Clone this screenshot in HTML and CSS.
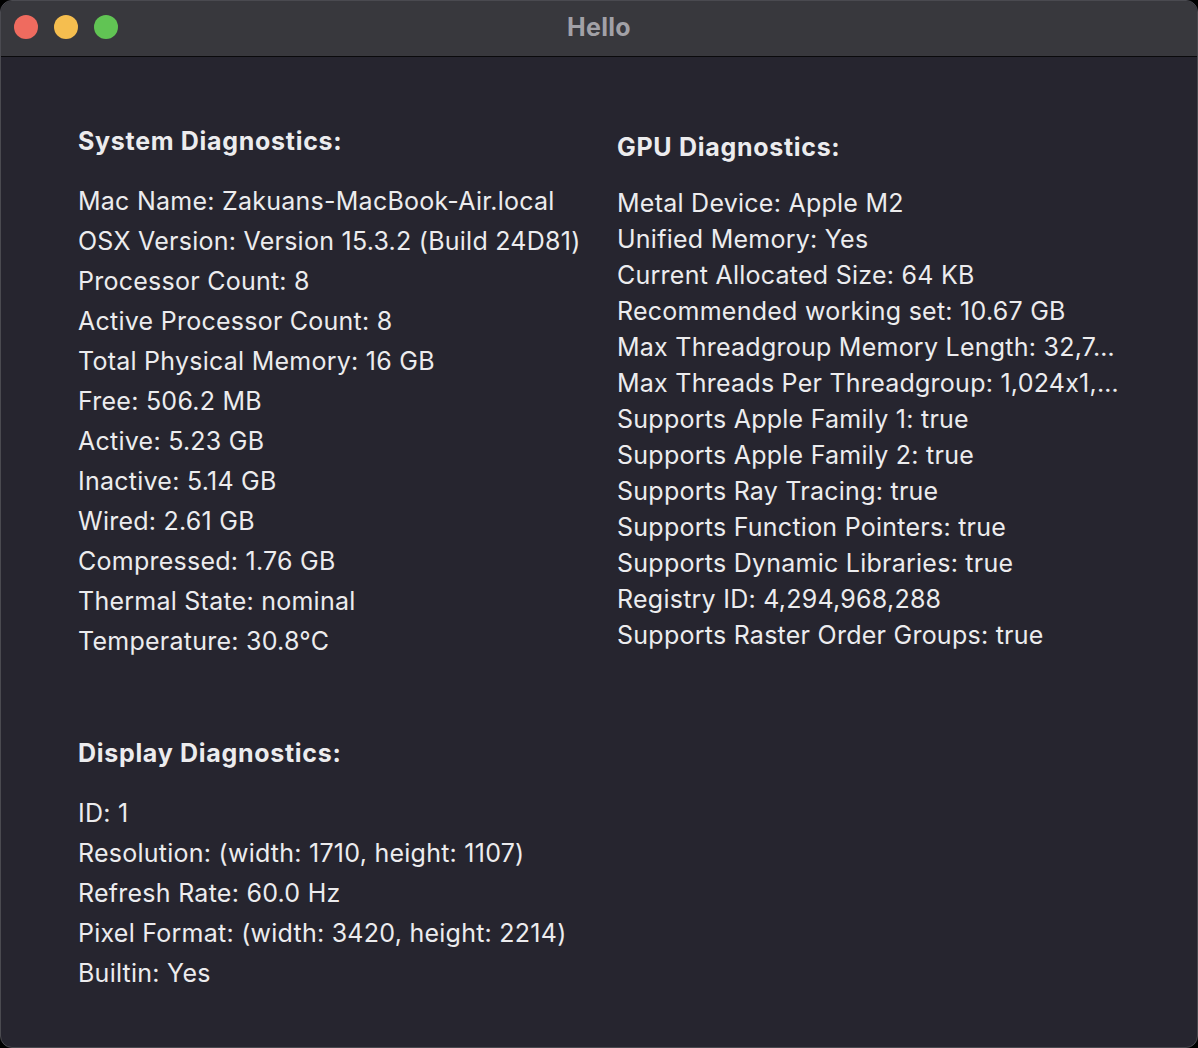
FILE: index.html
```html
<!DOCTYPE html>
<html>
<head>
<meta charset="utf-8">
<title>Hello</title>
<link rel="stylesheet" href="styles.css">
</head>
<body>
<div class="window">
  <div class="titlebar">
    <div class="lights">
      <span class="light red"></span>
      <span class="light yellow"></span>
      <span class="light green"></span>
    </div>
    <div class="title">Hello</div>
  </div>
  <div class="content">
    <div class="col left">
      <section class="sect sys">
        <h2 class="head">System Diagnostics:</h2>
        <ul class="rows">
          <li>Mac Name: Zakuans-MacBook-Air.local</li>
          <li>OSX Version: Version 15.3.2 (Build 24D81)</li>
          <li>Processor Count: 8</li>
          <li>Active Processor Count: 8</li>
          <li>Total Physical Memory: 16 GB</li>
          <li>Free: 506.2 MB</li>
          <li>Active: 5.23 GB</li>
          <li>Inactive: 5.14 GB</li>
          <li>Wired: 2.61 GB</li>
          <li>Compressed: 1.76 GB</li>
          <li>Thermal State: nominal</li>
          <li>Temperature: 30.8°C</li>
        </ul>
      </section>
      <section class="sect disp">
        <h2 class="head">Display Diagnostics:</h2>
        <ul class="rows">
          <li>ID: 1</li>
          <li>Resolution: (width: 1710, height: 1107)</li>
          <li>Refresh Rate: 60.0 Hz</li>
          <li>Pixel Format: (width: 3420, height: 2214)</li>
          <li>Builtin: Yes</li>
        </ul>
      </section>
    </div>
    <div class="col right">
      <section class="sect gpu">
        <h2 class="head">GPU Diagnostics:</h2>
        <ul class="rows tight">
          <li>Metal Device: Apple M2</li>
          <li>Unified Memory: Yes</li>
          <li>Current Allocated Size: 64 KB</li>
          <li>Recommended working set: 10.67 GB</li>
          <li>Max Threadgroup Memory Length: 32,7…</li>
          <li>Max Threads Per Threadgroup: 1,024x1,…</li>
          <li>Supports Apple Family 1: true</li>
          <li>Supports Apple Family 2: true</li>
          <li>Supports Ray Tracing: true</li>
          <li>Supports Function Pointers: true</li>
          <li>Supports Dynamic Libraries: true</li>
          <li>Registry ID: 4,294,968,288</li>
          <li>Supports Raster Order Groups: true</li>
        </ul>
      </section>
    </div>
  </div>
</div>
</body>
</html>
```
FILE: styles.css
```css
html, body {
  margin: 0;
  padding: 0;
  background: #000;
}
body {
  width: 1198px;
  height: 1048px;
  overflow: hidden;
  font-family: Inter, "Liberation Sans", sans-serif;
  font-feature-settings: "calt" 0;
}
.window {
  box-sizing: border-box;
  width: 1198px;
  height: 1048px;
  border-radius: 12px;
  overflow: hidden;
  background: #26252f;
  border: 1px solid #4a4a50;
  display: flex;
  flex-direction: column;
}
.titlebar {
  box-sizing: border-box;
  height: 56px;
  flex: 0 0 56px;
  background: #38383d;
  border-bottom: 1px solid #0a0a0c;
  position: relative;
  display: flex;
  align-items: center;
  justify-content: center;
}
.lights {
  position: absolute;
  left: 13px;
  top: 14px;
  display: flex;
  gap: 16px;
}
.light {
  width: 24px;
  height: 24px;
  border-radius: 50%;
  display: block;
}
.red { background: #ef6b5f; }
.yellow { background: #f5be4f; }
.green { background: #61c454; }
.title {
  font-size: 25px;
  font-weight: 700;
  color: #a2a1a7;
  margin-top: -3px;
  letter-spacing: 0.3px;
}
.content {
  flex: 1;
  display: flex;
  padding: 64px 0 0 77px;
  color: #ececee;
}
.col {
  display: flex;
  flex-direction: column;
}
.left {
  width: 539px;
  gap: 72px;
}
.right {
  width: 520px;
  padding-top: 8px;
}
.sect {
  display: flex;
  flex-direction: column;
  gap: 20px;
}
.head {
  margin: 0;
  font-size: 25px;
  font-weight: 700;
  line-height: 40px;
  letter-spacing: 0.7px;
}
.gpu .head { line-height: 36px; }
.rows {
  list-style: none;
  margin: 0;
  padding: 0;
  font-size: 25px;
  line-height: 40px;
  letter-spacing: 0.25px;
}
.rows.tight { line-height: 36px; }
.rows li {
  white-space: nowrap;
}
```
